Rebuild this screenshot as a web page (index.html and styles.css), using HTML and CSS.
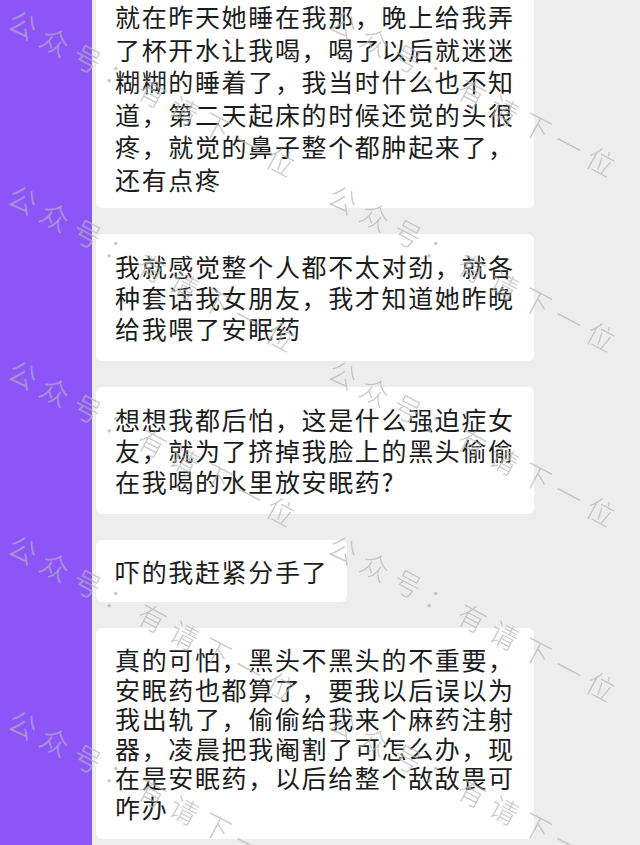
FILE: index.html
```html
<!DOCTYPE html>
<html lang="zh-CN">
<head>
  <meta charset="utf-8">
  <meta name="viewport" content="width=device-width, initial-scale=1">
  <link rel="stylesheet" href="styles.css">
</head>
<body>
  <div class="page">
    <aside class="side"></aside>
    <main class="chat">
      <div class="msg msg-loose">就在昨天她睡在我那，晚上给我弄<br>了杯开水让我喝，喝了以后就迷迷<br>糊糊的睡着了，我当时什么也不知<br>道，第二天起床的时候还觉的头很<br>疼，就觉的鼻子整个都肿起来了，<br>还有点疼</div>
      <div class="msg">我就感觉整个人都不太对劲，就各<br>种套话我女朋友，我才知道她昨晚<br>给我喂了安眠药</div>
      <div class="msg">想想我都后怕，这是什么强迫症女<br>友，就为了挤掉我脸上的黑头偷偷<br>在我喝的水里放安眠药?</div>
      <div class="msg msg-short">吓的我赶紧分手了</div>
      <div class="msg msg-tight">真的可怕，黑头不黑头的不重要，<br>安眠药也都算了，要我以后误以为<br>我出轨了，偷偷给我来个麻药注射<br>器，凌晨把我阉割了可怎么办，现<br>在是安眠药，以后给整个敌敌畏可<br>咋办</div>
    </main>
  </div>

  <!-- watermark layer over the whole shot -->
  <div class="watermark">
    <span>公众号：有请下一位</span>
    <span>公众号：有请下一位</span>
    <span>公众号：有请下一位</span>
    <span>公众号：有请下一位</span>
    <span>公众号：有请下一位</span>
    <span>公众号：有请下一位</span>
    <span>公众号：有请下一位</span>
    <span>公众号：有请下一位</span>
    <span>公众号：有请下一位</span>
    <span>公众号：有请下一位</span>
  </div>
</body>
</html>
```

FILE: styles.css
```css
html, body {margin: 0; padding: 0;}
body {background: #ededed; font-family: "Noto Sans CJK SC", "Noto Sans", sans-serif; overflow: hidden;}

.page {display: flex; height: 845px; overflow: hidden;}
.side {width: 92px; flex-shrink: 0; background: #8b55f8;}

.chat {display: flex; flex-direction: column; align-items: flex-start; gap: 26px; padding-left: 4px; margin-top: -17px;}

.msg {box-sizing: border-box; width: 438px; padding: 17px 19px 17px 19px; background: #fff; border-radius: 6px;
  color: #1c1c1c; font-size: 25px; line-height: 31px; letter-spacing: 1.65px; white-space: nowrap;}
.msg-loose {line-height: 32.5px; padding-bottom: 13px;}
.msg-tight {line-height: 29.5px;}
.msg-short {width: auto; padding-top: 16px; padding-bottom: 15px;}

.watermark {position: fixed; top: 4px; left: -8px; display: grid; grid-template-columns: 320px 320px; grid-auto-rows: 175px; pointer-events: none;}
.watermark span {place-self: center; transform: rotate(28deg); white-space: nowrap; font-size: 28px; font-weight: 300;
  letter-spacing: 8.5px; padding-left: 8.5px; color: rgba(145, 145, 145, 0.48); text-shadow: 0 0 1px rgba(255, 255, 255, 0.5);}
```
